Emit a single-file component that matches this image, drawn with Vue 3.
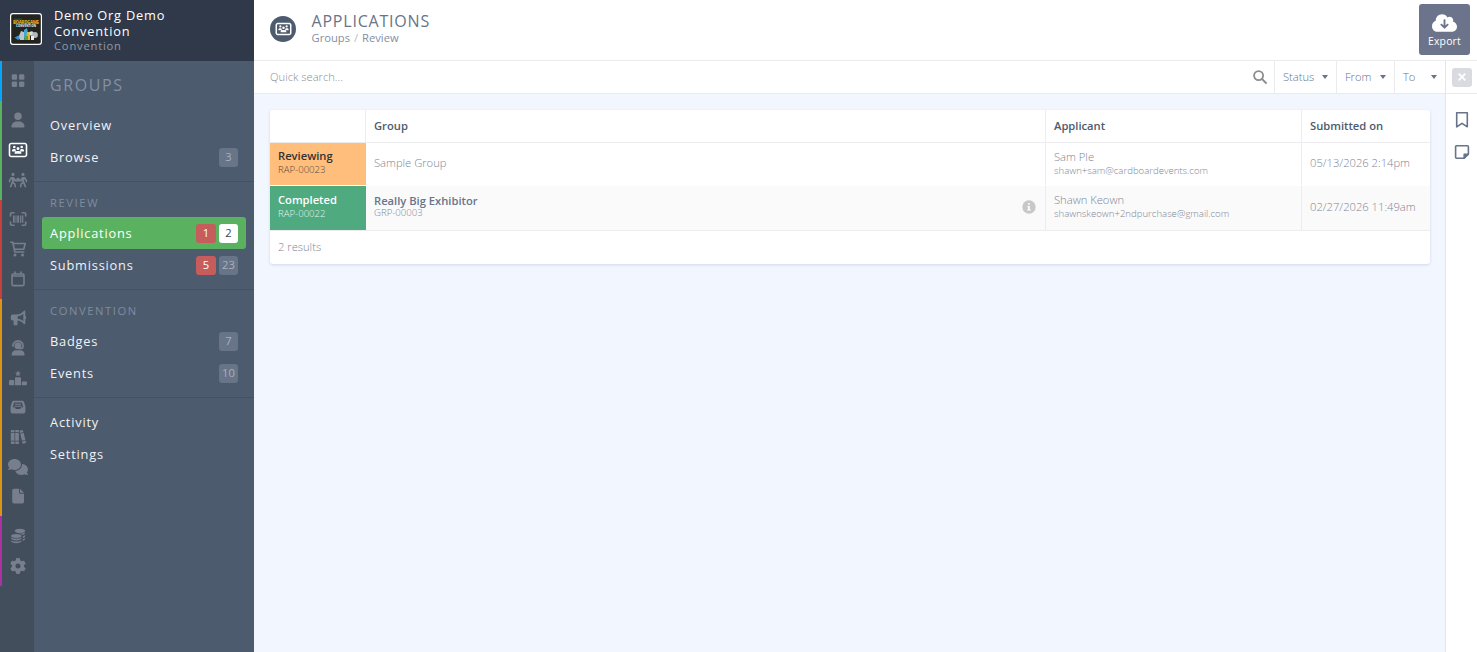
<template>
  <div class="app">
    <aside class="sidebar">
      <div class="brand">
        <svg class="brand-logo" viewBox="0 0 32 32">
          <rect x="0.6" y="0.6" width="30.8" height="30.8" rx="2.4" fill="#23231f" stroke="#fff" stroke-width="1.2" />
          <path d="M4 6.2h8" stroke="#1c5b6c" stroke-width="1" />
          <text x="3" y="11.2" class="logo-title" textLength="26">BOARDGAME</text>
          <text x="6" y="14" class="logo-sub" textLength="20">CONVENTION</text>
          <path d="M4.5 24.5l4-2 3 2.5-3.5 2z" fill="#3b8fd0" />
          <path d="M9 23l2-5 3 1v8h-4z" fill="#b9c7c9" />
          <path d="M14 17l3-2 1 5-2 6-2-1z" fill="#3fa4d8" />
          <path d="M17 19h3v8h-4z" fill="#d8b928" />
          <path d="M15 23h3v4h-4z" fill="#5aa63c" />
          <circle cx="21.5" cy="20.5" r="2.2" fill="#d8dcdc" />
          <circle cx="25" cy="22" r="2.9" fill="#b4b9ba" />
          <path d="M21 23h3v4h-3z" fill="#eef0f0" />
        </svg>
        <div class="brand-text">
          <div class="brand-name">Demo Org Demo Convention</div>
          <div class="brand-type">Convention</div>
        </div>
      </div>

      <div class="sidebar-body">
        <nav class="rail">
          <div v-for="group in rail" :key="group.name" class="rail-group" :class="group.name">
            <a
              v-for="name in group.items"
              :key="name"
              class="rail-item"
              :class="{ active: name === 'groups' }"
            >
              <svg width="20" height="16" :viewBox="icons[name].box || '0 0 20 16'">
                <path v-if="icons[name].fill" :d="icons[name].fill" fill="currentColor" fill-rule="evenodd" />
                <path
                  v-if="icons[name].line"
                  :d="icons[name].line"
                  fill="none"
                  stroke="currentColor"
                  stroke-width="1.6"
                  stroke-linecap="round"
                  stroke-linejoin="round"
                />
              </svg>
            </a>
          </div>
        </nav>

        <nav class="menu">
          <h2 class="menu-title">GROUPS</h2>
          <section v-for="(section, i) in menu" :key="i" class="menu-section">
            <h3 v-if="section.title" class="menu-heading">{{ section.title }}</h3>
            <a
              v-for="item in section.items"
              :key="item.label"
              class="menu-item"
              :class="{ active: item.label === current }"
            >
              <span class="menu-label">{{ item.label }}</span>
              <span v-if="item.alert" class="count alert">{{ item.alert }}</span>
              <span v-if="item.count" class="count">{{ item.count }}</span>
            </a>
          </section>
        </nav>
      </div>
    </aside>

    <main class="main">
      <header class="header">
        <span class="header-icon">
          <svg width="17" height="14" viewBox="0 0 20 16">
            <path :d="icons.groups.fill" fill="currentColor" />
            <path :d="icons.groups.line" fill="none" stroke="currentColor" stroke-width="1.8" />
          </svg>
        </span>
        <div class="header-text">
          <h1>APPLICATIONS</h1>
          <div class="crumbs"><a>Groups</a><span class="sep">/</span><a>Review</a></div>
        </div>
        <button class="export">
          <svg width="25" height="20" viewBox="0 0 640 512">
            <path
              fill="currentColor"
              d="M144 480C64.5 480 0 415.5 0 336c0-62.8 40.2-116.2 96.2-135.9c-.1-2.7-.2-5.4-.2-8.1c0-88.4 71.6-160 160-160c59.3 0 111 32.2 138.7 80.2C409.9 102 428.3 96 448 96c53 0 96 43 96 96c0 12.2-2.3 23.8-6.4 34.6C596 238.4 640 290.1 640 352c0 70.7-57.3 128-128 128H144zm79-167l80 80c9.4 9.4 24.6 9.4 33.9 0l80-80c9.4-9.4 9.4-24.6 0-33.9s-24.6-9.4-33.9 0l-39 39V184c0-13.3-10.7-24-24-24s-24 10.7-24 24V318.1l-39-39c-9.4-9.4-24.6-9.4-33.9 0s-9.4 24.6 0 33.9z"
            />
          </svg>
          <span>Export</span>
        </button>
      </header>

      <div class="workspace">
        <div class="content">
          <div class="filters">
            <input v-model="query" class="search" type="text" placeholder="Quick search..." />
            <svg class="search-icon" width="14" height="14" viewBox="0 0 14 14">
              <circle cx="5.6" cy="5.6" r="4.5" />
              <path d="M9 9l4 4" />
            </svg>
            <div v-for="filter in filters" :key="filter" class="filter" :class="filter.toLowerCase()">
              <span>{{ filter }}</span>
              <i class="caret"></i>
            </div>
          </div>

          <div class="card">
            <table>
              <thead>
                <tr>
                  <th class="col-status"></th>
                  <th class="col-group">Group</th>
                  <th class="col-applicant">Applicant</th>
                  <th class="col-date">Submitted on</th>
                </tr>
              </thead>
              <tbody>
                <tr v-for="row in rows" :key="row.code">
                  <td class="status" :class="row.status.toLowerCase()">
                    <div class="status-name">{{ row.status }}</div>
                    <div class="small">{{ row.code }}</div>
                  </td>
                  <td>
                    <div class="group-cell">
                      <div>
                        <div :class="{ linked: row.groupCode }">{{ row.group }}</div>
                        <div v-if="row.groupCode" class="small code">{{ row.groupCode }}</div>
                      </div>
                      <svg v-if="row.info" class="info" width="14" height="14" viewBox="0 0 14 14">
                        <circle cx="7" cy="7" r="6.7" fill="#c8c8c8" />
                        <path d="M6.1 3h1.8v1.7H6.1zM5.3 5.9h2.6v3.3h.9v1.3H5.2V9.2h.9V7.2h-.8z" fill="#fafafa" />
                      </svg>
                    </div>
                  </td>
                  <td class="applicant">
                    <div>{{ row.name }}</div>
                    <div class="small">{{ row.email }}</div>
                  </td>
                  <td class="date">{{ row.date }}</td>
                </tr>
              </tbody>
            </table>
            <div class="results">{{ rows.length }} results</div>
          </div>
        </div>

        <div class="tools">
          <div class="tools-top">
            <button class="close">
              <svg width="8" height="8" viewBox="0 0 8 8"><path d="M.7.7l6.6 6.6M7.3.7L.7 7.3" /></svg>
            </button>
          </div>
          <svg class="tool" width="14" height="18" viewBox="0 0 14 18">
            <path d="M1.7 1.7h10.6v14.1L7 12.3l-5.3 3.5z" />
          </svg>
          <svg class="tool" width="16" height="16" viewBox="0 0 16 16">
            <path d="M2.6 1.7h10.8a1 1 0 0 1 1 1v7.2l-4.5 4.4H2.6a1 1 0 0 1-1-1V2.7a1 1 0 0 1 1-1z" />
            <path class="fold" d="M14.2 10.2h-4v4z" />
          </svg>
        </div>
      </div>
    </main>
  </div>
</template>

<script setup>
import { ref } from 'vue'

const query = ref('')
const current = ref('Applications')

const filters = ['Status', 'From', 'To']

const rail = [
  { name: 'blue', items: ['dashboard'] },
  { name: 'green', items: ['user', 'groups', 'carry'] },
  { name: 'red', items: ['barcode', 'cart', 'calendar'] },
  { name: 'orange', items: ['bullhorn', 'support', 'ranking', 'inbox', 'library', 'comments', 'file'] },
  { name: 'purple', items: ['coins', 'gear'] }
]

const menu = [
  { items: [{ label: 'Overview' }, { label: 'Browse', count: 3 }] },
  {
    title: 'REVIEW',
    items: [
      { label: 'Applications', alert: 1, count: 2 },
      { label: 'Submissions', alert: 5, count: 23 }
    ]
  },
  {
    title: 'CONVENTION',
    items: [{ label: 'Badges', count: 7 }, { label: 'Events', count: 10 }]
  },
  { items: [{ label: 'Activity' }, { label: 'Settings' }] }
]

const rows = [
  {
    status: 'Reviewing',
    code: 'RAP-00023',
    group: 'Sample Group',
    name: 'Sam Ple',
    email: 'shawn+sam@cardboardevents.com',
    date: '05/13/2026 2:14pm'
  },
  {
    status: 'Completed',
    code: 'RAP-00022',
    group: 'Really Big Exhibitor',
    groupCode: 'GRP-00003',
    info: true,
    name: 'Shawn Keown',
    email: 'shawnskeown+2ndpurchase@gmail.com',
    date: '02/27/2026 11:49am'
  }
]

// Drawn on a 20x16 box unless an icon brings its own
const icons = {
  dashboard: {
    fill: 'M5 1.2h2.8a1.3 1.3 0 0 1 1.3 1.3v2.9a1.3 1.3 0 0 1-1.3 1.3H5a1.3 1.3 0 0 1-1.3-1.3V2.5A1.3 1.3 0 0 1 5 1.2zM12.3 1.2h2.8a1.3 1.3 0 0 1 1.3 1.3v2.9a1.3 1.3 0 0 1-1.3 1.3h-2.8a1.3 1.3 0 0 1-1.3-1.3V2.5a1.3 1.3 0 0 1 1.3-1.3zM5 8.5h2.8a1.3 1.3 0 0 1 1.3 1.3v2.9a1.3 1.3 0 0 1-1.3 1.3H5a1.3 1.3 0 0 1-1.3-1.3v-2.9A1.3 1.3 0 0 1 5 8.5zM12.3 8.5h2.8a1.3 1.3 0 0 1 1.3 1.3v2.9a1.3 1.3 0 0 1-1.3 1.3h-2.8a1.3 1.3 0 0 1-1.3-1.3v-2.9a1.3 1.3 0 0 1 1.3-1.3z'
  },
  user: {
    box: '-96 -16 640 544',
    fill: 'M224 256A128 128 0 1 0 224 0a128 128 0 1 0 0 256zm-45.7 48C79.8 304 0 383.8 0 482.3C0 498.7 13.3 512 29.7 512H418.3c16.4 0 29.7-13.3 29.7-29.7C448 383.8 368.2 304 269.7 304H178.3z'
  },
  groups: {
    fill: 'M6.3 3.7a1.3 1.3 0 1 1 0 2.6a1.3 1.3 0 0 1 0-2.6zM13.7 3.7a1.3 1.3 0 1 1 0 2.6a1.3 1.3 0 0 1 0-2.6zM10 5.1a1.5 1.5 0 1 1 0 3a1.5 1.5 0 0 1 0-3zM3.9 8.8c0-1 .8-1.8 1.8-1.8h1c.5 0 .7.2 1 .5-.1 1 .2 1.5.6 1.9H4.3zM16.1 8.8c0-1-.8-1.8-1.8-1.8h-1c-.5 0-.7.2-1 .5.1 1-.2 1.5-.6 1.9h4zM6.5 11.8c0-1.7 1.1-2.7 2.5-2.7h2c1.4 0 2.5 1 2.5 2.7z',
    line: 'M3.3 1.5h13.4a1.8 1.8 0 0 1 1.8 1.8v9.4a1.8 1.8 0 0 1-1.8 1.8H3.3a1.8 1.8 0 0 1-1.8-1.8V3.3a1.8 1.8 0 0 1 1.8-1.8z'
  },
  carry: {
    fill: 'M5 .8a1.6 1.6 0 1 1 0 3.2a1.6 1.6 0 0 1 0-3.2zM15 .8a1.6 1.6 0 1 1 0 3.2a1.6 1.6 0 0 1 0-3.2zM3.4 5h2.4l2 2.6h.8V6h2.8v1.600h.8l2-2.600h2.400l1.200 1.500-1.600 1.300v3h-2V8.400l-1 1H6.800l-1-1v2.400h-2v-3L2.200 6.500z',
    line: 'M3.4 5.8L1.6 8.4v1.4M16.600 5.800l1.800 2.600v1.400M4.200 10.600l-1.600 4M5.400 10.800l1.500 1.400.4 2.400M15.800 10.600l1.600 4M14.600 10.800l-1.500 1.400-.4 2.400'
  },
  barcode: {
    fill: 'M5 4.5h1.7v7.2H5zM7.5 4.5h1v7.2h-1zM9.2 4.5h1.9v7.2H9.2zM12 4.5h1v7.2h-1zM13.7 4.5h1.6v7.2h-1.6z',
    line: 'M2.5 5V3a1.3 1.3 0 0 1 1.3-1.3H6M14.2 1.7h2.2A1.3 1.3 0 0 1 17.7 3v2M17.7 11v2a1.3 1.3 0 0 1-1.3 1.3h-2.2M6 14.3H3.8A1.3 1.3 0 0 1 2.5 13v-2'
  },
  cart: {
    fill: 'M7 12.4a1.5 1.5 0 1 1 0 3a1.5 1.5 0 0 1 0-3zM14.5 12.4a1.5 1.5 0 1 1 0 3a1.5 1.5 0 0 1 0-3z',
    line: 'M2.8 1.2h2l2 9.8h9M5.2 2.5h12l-1.5 5.8H6.3'
  },
  calendar: {
    line: 'M5.3 3h9.4a1.3 1.3 0 0 1 1.3 1.3v9a1.3 1.3 0 0 1-1.3 1.3H5.3A1.3 1.3 0 0 1 4 13.3v-9A1.3 1.3 0 0 1 5.3 3zM4 5h12M7 1v2M13 1v2'
  },
  bullhorn: {
    fill: 'M16 .8c.5-.4 1.3-.1 1.3.6v4.3c.6.3.9.9.9 1.7s-.3 1.400-.9 1.700v4.300c0 .7-.8 1-1.3.6l-1.900-1.700c-1.300-1.100-2.900-1.800-4.600-1.900v3.800c0 .6-.4 1-1 1H6.600c-.6 0-1-.4-1-1v-3.800h-.8c-1.200 0-2-.8-2-2V6.600c0-1.200.8-2 2-2h4.100c1.900 0 3.800-.7 5.200-2zM15.300 3.700c-1.600 1.400-3.500 2.200-5.600 2.400v2.700c2.100.2 4 1 5.600 2.400z'
  },
  support: {
    fill: 'M10 2.3a3.5 3.5 0 1 1 0 7a3.5 3.5 0 0 1 0-7zM3.6 15c0-3 2-4.7 4.5-4.7h4.2c2.5 0 4.3 1.7 4.3 4.7 0 .3-.3.5-.6.5H4.2a.6.6 0 0 1-.6-.5z',
    line: 'M4.9 6.3V5.8a5.1 4.9 0 0 1 10.2 0v.7c0 1.2-.8 2-2 2H11'
  },
  ranking: {
    fill: 'M10 .6l.9 1.8 2 .3-1.500 1.400.4 2L10 5.200 8.200 6.100l.4-2L7.100 2.700l2-.3zM8 7.300h4a1 1 0 0 1 1 1v6.900H7V8.300a1 1 0 0 1 1-1zM2 10h3.200a1 1 0 0 1 1 1v4.200H2a1 1 0 0 1-1-1V11a1 1 0 0 1 1-1zM14.800 11.500H18a1 1 0 0 1 1 1v1.700a1 1 0 0 1-1 1h-4.200v-2.700a1 1 0 0 1 1-1z'
  },
  inbox: {
    fill: 'M6 1.7h8c1 0 1.7.5 2 1.4l1.4 4.5v5.2a1.8 1.8 0 0 1-1.8 1.8H4.4a1.8 1.8 0 0 1-1.8-1.8V7.6L4 3.1c.3-.9 1-1.4 2-1.4zM6.1 3.6L4.8 8.3h2l1 1.8h4.4l1-1.8h2l-1.3-4.7zM7 4.7h6v1H7zM6.6 6.7h6.8v1H6.6z'
  },
  library: {
    fill: 'M3.5 1h2.3a.7.7 0 0 1 .7.7v1.5H2.8V1.7A.7.7 0 0 1 3.5 1zM2.8 4h3.7v7.7H2.8zM2.8 12.5h3.7v1.8a.7.7 0 0 1-.7.7H3.5a.7.7 0 0 1-.7-.7zM7.9 1h2.3a.7.7 0 0 1 .7.7v1.5H7.2V1.7A.7.7 0 0 1 7.9 1zM7.2 4h3.7v7.7H7.2zM7.2 12.5h3.7v1.8a.7.7 0 0 1-.7.7H7.9a.7.7 0 0 1-.7-.7zM11.5 1.8l2.7-.8.7.4.5 1.5-3.4 1zM12.2 4.8l3.4-1 1.8 7-3.4 1zM14.2 12.6l3.4-1 .4 1.7-.4.8-2.3.7-.7-.4z'
  },
  comments: {
    box: '0 0 640 512',
    fill: 'M208 352c114.9 0 208-78.8 208-176S322.9 0 208 0S0 78.8 0 176c0 38.6 14.7 74.3 39.6 103.4c-3.5 9.4-8.7 17.7-14.2 24.7c-4.8 6.2-9.7 11-13.3 14.3c-1.8 1.6-3.3 2.9-4.3 3.7c-10.8 8.1-8.8 30 11.2 30c21.8 0 43.8-5.6 62.1-12.5c9.2-3.5 17.8-7.4 25.2-11.4C134.1 343.3 169.8 352 208 352zM448 176c0 112.3-99.1 196.9-216.5 207C255.8 457.4 336.4 512 432 512c38.2 0 73.9-8.7 104.7-23.9c7.5 4 16 7.9 25.2 11.4c18.3 6.9 40.3 12.5 62.1 12.5c20 0 22-22 11.2-30c-12-10-23-23-31.8-42.6C625.3 410.3 640 374.6 640 336c0-92.9-84.9-168.9-192.6-175.5c.4 5.1 .6 10.3 .6 15.5z'
  },
  file: {
    fill: 'M5.9.7h5.2v4.1c0 .5.4.9.9.9h4v8a1.7 1.7 0 0 1-1.7 1.7H5.9a1.7 1.7 0 0 1-1.7-1.7V2.4A1.7 1.7 0 0 1 5.9.7zM12 .7l4 4.1h-4z'
  },
  coins: {
    fill: 'M12 .8c2.9 0 5.2.9 5.2 2.1S14.9 5 12 5 6.8 4.1 6.8 2.9 9.1.8 12 .8zM17.2 4.6c0 1.6-1.5 2.1-2.7 2.4-.6-1.1-2.7-1.5-4.3-1.6 2.7.5 5.7 0 7-.8zM17.2 7.7c0 1.3-1 1.9-2.4 2.2V8.2c1-.2 1.9-.6 2.4-1.2zM17.2 10.6c0 1.3-1 1.9-2.4 2.2v-1.7c1-.2 1.9-.6 2.4-1.2zM8.3 6c2.9 0 5.3.8 5.3 2s-2.4 2-5.3 2S3 9.2 3 8s2.4-2 5.3-2zM3 9.6c1.500 1.600 9 1.600 10.600 0 .7 3.700-11.300 3.700-10.600 0zM3 12.300c1.500 1.600 9 1.600 10.600 0 .7 3.900-11.300 3.900-10.600 0z'
  },
  gear: {
    box: '-40 0 592 512',
    fill: 'M495.9 166.6c3.2 8.7 .5 18.4-6.4 24.6l-43.3 39.4c1.1 8.3 1.7 16.8 1.7 25.4s-.6 17.1-1.7 25.4l43.3 39.4c6.9 6.2 9.6 15.9 6.4 24.6c-4.4 11.9-9.7 23.3-15.8 34.3l-4.7 8.1c-6.6 11-14 21.4-22.1 31.2c-5.9 7.2-15.7 9.6-24.5 6.8l-55.7-17.7c-13.4 10.3-28.2 18.9-44 25.4l-12.5 57.1c-2 9.1-9 16.3-18.2 17.8c-13.8 2.3-28 3.5-42.5 3.5s-28.7-1.2-42.5-3.5c-9.2-1.5-16.2-8.7-18.2-17.8l-12.5-57.1c-15.8-6.5-30.6-15.1-44-25.4L83.1 425.9c-8.8 2.8-18.6 .3-24.5-6.8c-8.1-9.8-15.5-20.2-22.1-31.2l-4.7-8.1c-6.1-11-11.4-22.4-15.8-34.3c-3.2-8.7-.5-18.4 6.4-24.6l43.3-39.4C64.6 273.1 64 264.6 64 256s.6-17.1 1.7-25.4L22.4 191.2c-6.9-6.2-9.6-15.9-6.4-24.6c4.4-11.9 9.7-23.3 15.8-34.3l4.7-8.1c6.6-11 14-21.4 22.1-31.2c5.9-7.2 15.7-9.6 24.5-6.8l55.7 17.7c13.4-10.3 28.2-18.9 44-25.4l12.5-57.1c2-9.1 9-16.3 18.2-17.8C227.3 1.2 241.5 0 256 0s28.7 1.2 42.5 3.5c9.2 1.5 16.2 8.7 18.2 17.8l12.5 57.1c15.8 6.5 30.6 15.1 44 25.4l55.7-17.7c8.8-2.8 18.6-.3 24.5 6.8c8.1 9.8 15.5 20.2 22.1 31.2l4.7 8.1c6.1 11 11.4 22.4 15.8 34.3zM256 336a80 80 0 1 0 0-160 80 80 0 1 0 0 160z'
  }
}
</script>

<style>
body {
  margin: 0;
  overflow: hidden;
}
</style>

<style scoped>
* {
  box-sizing: border-box;
}

.app {
  display: flex;
  height: 100vh;
  font-family: "Open Sans", sans-serif;
  font-size: 11.2px;
  line-height: 16px;
  color: #7d8698;
}

svg {
  display: block;
  flex: none;
}

h1,
h2,
h3 {
  margin: 0;
  font-weight: 400;
}

button {
  border: 0;
  padding: 0;
  font: inherit;
}

.sidebar {
  display: flex;
  flex-direction: column;
  width: 254px;
  flex: none;
}

.brand {
  display: flex;
  height: 61px;
  background: #2f3949;
  padding: 7px 10px;
}

.brand-logo {
  width: 32px;
  height: 32px;
  margin-top: 6px;
}

.logo-title {
  font-size: 4.4px;
  font-weight: 800;
  fill: #d0a31d;
}

.logo-sub {
  font-size: 2.8px;
  font-weight: 700;
  fill: #fff;
}

.brand-text {
  margin-left: 12px;
  color: #fff;
  letter-spacing: 0.8px;
}

.brand-name {
  font-size: 12.8px;
}

.brand-type {
  font-size: 11.2px;
  line-height: 13px;
  color: #9299a4;
}

.sidebar-body {
  display: flex;
  flex: 1;
}

.rail {
  width: 34px;
  background: #434e5d;
}

.rail-group {
  padding: 5px 0;
  border-left: 2px solid;
}

.rail-group.blue { border-color: #08a5ff; }
.rail-group.green { border-color: #5ab261; }
.rail-group.red { border-color: #c8403c; }
.rail-group.orange { border-color: #dc9416; }
.rail-group.purple { border-color: #ac30a0; }

.rail-item {
  display: flex;
  align-items: center;
  justify-content: center;
  height: 29.66px;
  color: #767f8b;
}

.rail-item.active {
  color: #fff;
}

.menu {
  flex: 1;
  background: #4d5b6e;
  color: #f1f2f4;
}

.menu-title {
  padding: 12px 16px 0;
  height: 40px;
  font-size: 16px;
  line-height: 24px;
  letter-spacing: 1.6px;
  color: #8390a3;
}

.menu-section {
  padding: 8px;
}

.menu-section + .menu-section {
  border-top: 1px solid #445163;
}

.menu-heading {
  height: 27px;
  padding-left: 8px;
  font-size: 11.2px;
  line-height: 25px;
  letter-spacing: 1.6px;
  color: #7f8b9e;
}

.menu-item {
  display: flex;
  align-items: center;
  gap: 3px;
  height: 32px;
  padding: 0 8px;
  border-radius: 3px;
  font-size: 12.8px;
  letter-spacing: 0.8px;
}

.menu-item.active {
  background: #5ab261;
  color: #fff;
}

.menu-label {
  flex: 1;
}

.count {
  width: 19px;
  height: 19px;
  border-radius: 3px;
  background: #687488;
  color: #a9b0bb;
  font-size: 11.2px;
  line-height: 18px;
  letter-spacing: 0;
  text-align: center;
}

.count.alert {
  width: 20px;
  background: #c65c5c;
  color: #fff;
}

.menu-item.active .count:not(.alert) {
  background: #fff;
  color: #444;
}

.main {
  display: flex;
  flex-direction: column;
  flex: 1;
  min-width: 0;
}

.header {
  display: flex;
  height: 61px;
  border-bottom: 1px solid #ebebed;
  padding: 4px 7px 0 16px;
}

.header-icon {
  display: flex;
  align-items: center;
  justify-content: center;
  width: 26px;
  height: 26px;
  margin-top: 12px;
  border-radius: 50%;
  background: #4d5b6e;
  color: #fff;
}

.header-text {
  flex: 1;
  margin: 7px 0 0 15.5px;
}

h1 {
  font-size: 16px;
  line-height: 20px;
  letter-spacing: 0.8px;
  color: #67748a;
}

.crumbs {
  line-height: 13px;
  color: #8390a3;
}

.sep {
  margin: 0 4px;
  color: #b9bec7;
}

.export {
  display: flex;
  flex-direction: column;
  align-items: center;
  width: 51px;
  height: 51px;
  padding-top: 9px;
  border-radius: 3px;
  background: #6b748a;
  color: #fff;
  font-size: 10.4px;
  letter-spacing: 0.2px;
}

.export span {
  line-height: 16px;
}

.workspace {
  display: flex;
  flex: 1;
}

.content {
  flex: 1;
  background: #f2f6ff;
}

.filters {
  display: flex;
  align-items: center;
  height: 33px;
  padding-left: 16px;
  background: #fff;
  border-bottom: 1px solid #ebebed;
}

.search {
  flex: 1;
  border: 0;
  padding: 0;
  outline: 0;
  font: inherit;
  font-weight: 300;
  background: none;
}

.search::placeholder {
  color: #8e8e8e;
}

.search-icon {
  margin-right: 7px;
  fill: none;
  stroke: #8c8c8c;
  stroke-width: 1.8;
  stroke-linecap: round;
}

.filter {
  display: flex;
  align-items: center;
  justify-content: space-between;
  height: 32px;
  padding: 0 7px 0 8px;
  border-left: 1px solid #ebebed;
  font-weight: 300;
  color: #67748a;
}

.filter.status { width: 62px; }
.filter.from { width: 58px; }
.filter.to { width: 51px; }

.caret {
  border: 3.5px solid transparent;
  border-top: 4px solid #67748a;
  border-bottom: 0;
  margin-right: 1px;
}

.card {
  margin: 16px 15px 0 16px;
  border-radius: 3px;
  overflow: hidden;
  background: #fff;
  box-shadow: 0 1px 3px rgba(60, 80, 120, 0.18);
}

table {
  width: 100%;
  border-collapse: separate;
  border-spacing: 0;
  table-layout: fixed;
}

.col-status { width: 96px; }
.col-applicant { width: 256px; }
.col-date { width: 129px; }

th {
  height: 33px;
  padding: 0 8px;
  text-align: left;
  font-weight: 550;
  color: #4d5b6e;
  border-bottom: 1px solid #ededef;
}

th + th,
td + td:not(:nth-child(2)) {
  border-left: 1px solid #ededef;
}

th.col-group {
  border-left: 0;
}

.col-status {
  border-right: 1px solid #ededef;
}

td {
  height: 43px;
  padding: 0 8px 2px;
  font-weight: 300;
  border-bottom: 1px solid #fff;
}

tr:nth-child(2) td {
  height: 45px;
  background: #fafafa;
  border-bottom-color: #ededef;
}

.small {
  font-size: 9.6px;
  line-height: 11px;
}

td.status,
td.applicant {
  padding-top: 6px;
  vertical-align: top;
}

td.reviewing {
  padding-top: 5px;
  background: #ffbe7b;
  color: #333;
}

tr:nth-child(2) td.completed {
  background: #50aa80;
  color: #fff;
}

.status-name {
  font-weight: 550;
}

.status .small {
  opacity: 0.85;
}

.date {
  white-space: nowrap;
}

.group-cell {
  display: flex;
  align-items: center;
  justify-content: space-between;
}

.linked {
  line-height: 12px;
  font-weight: 550;
  color: #67748a;
}

.code {
  line-height: 12px;
}

.info {
  margin-right: 1px;
}

.results {
  height: 33px;
  padding-left: 8px;
  line-height: 32px;
  font-weight: 300;
}

.tools {
  display: flex;
  flex-direction: column;
  align-items: center;
  width: 32px;
  border-left: 1px solid #dfe5f1;
}

.tools-top {
  width: 100%;
  height: 33px;
  padding: 7px 0 0 6px;
  border-bottom: 1px solid #ebebed;
}

.close {
  display: flex;
  align-items: center;
  justify-content: center;
  width: 20px;
  height: 19px;
  padding-bottom: 1px;
  border-radius: 3px;
  background: #dadbe0;
}

.close path {
  stroke: #fff;
  stroke-width: 1.7;
}

.tool {
  margin-top: 17px;
  fill: none;
  stroke: #67748a;
  stroke-width: 1.6;
  stroke-linejoin: round;
}

.tool + .tool {
  margin-top: 15px;
}

.tool .fold {
  fill: #67748a;
}
</style>
